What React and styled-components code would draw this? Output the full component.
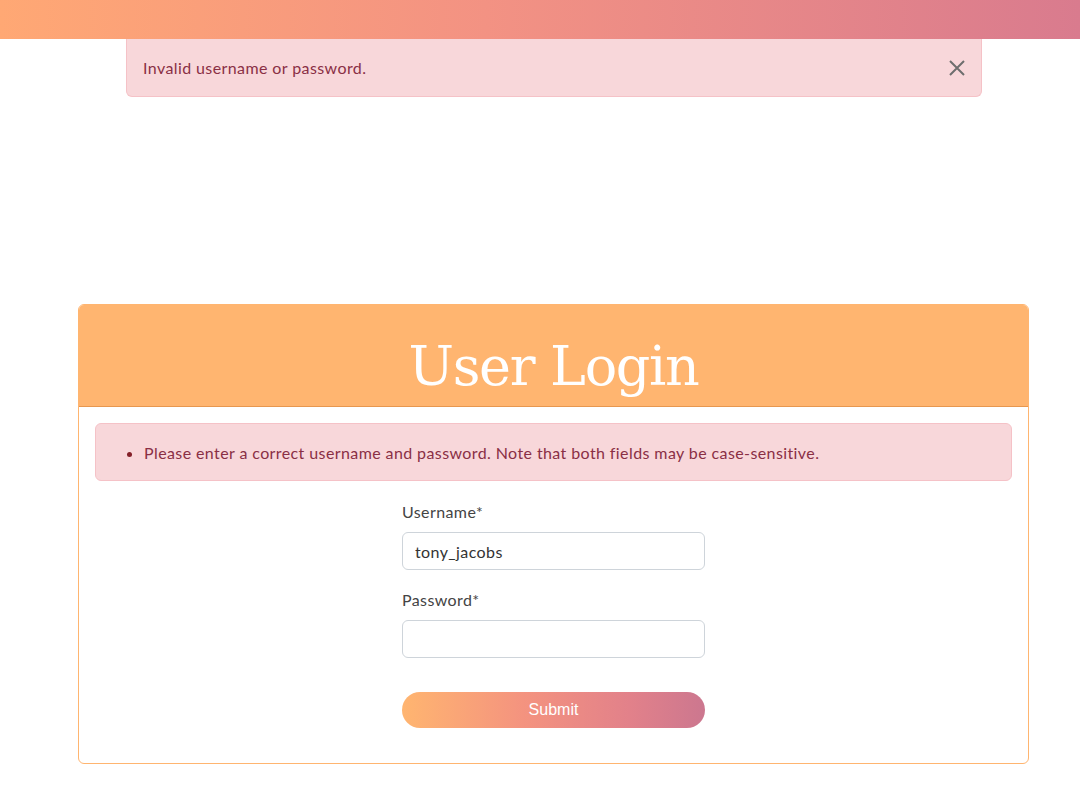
import React, { useState } from "react";
import styled, { createGlobalStyle } from "styled-components";

const GlobalStyle = createGlobalStyle`
  body {
    margin: 0;
    background: #fff;
    font-family: Lato, "Noto Sans", sans-serif;
  }
`;

const TopBar = styled.div`
  height: 39px;
  background: linear-gradient(90deg, #ffa874 0%, #f39283 45%, #d97b8e 100%);
`;

const Page = styled.div`
  padding: 0 51px 0 78px;
`;

const AlertWrap = styled.div`
  padding: 0 47px 0 48px;
`;

const Alert = styled.div`
  display: flex;
  align-items: center;
  justify-content: space-between;
  height: 58px;
  box-sizing: border-box;
  padding: 0 14px 0 16px;
  background: #f8d7da;
  border: 1px solid #f5c2c7;
  border-top: none;
  border-radius: 0 0 6px 6px;
  color: #8a2f45;
  font-size: 16px;
  letter-spacing: 0.4px;
`;

const CloseButton = styled.button`
  background: none;
  border: none;
  padding: 0;
  width: 20px;
  height: 20px;
  display: flex;
  align-items: center;
  justify-content: center;
  cursor: pointer;
`;

const Card = styled.div`
  margin-top: 207px;
  border: 1px solid #ffb570;
  border-radius: 6px;
  overflow: hidden;
`;

const CardHeader = styled.div`
  height: 102px;
  box-sizing: border-box;
  background: #ffb570;
  border-bottom: 1px solid #e7974f;
  display: flex;
  align-items: flex-end;
  justify-content: center;
`;

const Title = styled.h1`
  margin: 0 0 4px;
  color: #fff;
  font-family: "DejaVu Serif", "Liberation Serif", serif;
  font-weight: normal;
  font-size: 54px;
  line-height: 1.3;
  letter-spacing: -1.3px;
`;

const CardBody = styled.div`
  padding: 16px 16px 35px;
`;

const ErrorList = styled.ul`
  margin: 0;
  padding: 0 0 0 48px;
  height: 58px;
  box-sizing: border-box;
  display: flex;
  flex-direction: column;
  justify-content: center;
  background: #f8d7da;
  border: 1px solid #f5c2c7;
  border-radius: 6px;
  color: #8a2f45;
  font-size: 16px;
  letter-spacing: 0.4px;

  li::marker {
    color: #842029;
  }
`;

const Form = styled.form`
  width: 303px;
  margin: 20px auto 0;
  display: flex;
  flex-direction: column;
`;

const Label = styled.label`
  font-size: 16px;
  letter-spacing: 0.4px;
  color: #444;
  line-height: 22px;
  margin-bottom: 9px;
`;

const Input = styled.input`
  height: 38px;
  box-sizing: border-box;
  border: 1px solid #ced4da;
  border-radius: 6px;
  padding: 0 12px;
  font-family: Lato, "Noto Sans", sans-serif;
  font-size: 16px;
  letter-spacing: 0.4px;
  color: #333;
  margin-bottom: ${(p) => p.$gap}px;
  outline: none;
`;

const Submit = styled.button`
  height: 36px;
  border: none;
  border-radius: 18px;
  background: linear-gradient(90deg, #ffb570 0%, #f4937f 40%, #e2818a 75%, #cc778f 100%);
  color: #fff;
  font-family: Arial, "Liberation Sans", sans-serif;
  font-size: 16px;
  cursor: pointer;
`;

const App = () => {
  const [showAlert, setShowAlert] = useState(true);
  const [username, setUsername] = useState("tony_jacobs");
  const [password, setPassword] = useState("");

  return (
    <>
      <GlobalStyle />
      <TopBar />
      <Page>
        <AlertWrap>
          {showAlert ? (
            <Alert>
              <span>Invalid username or password.</span>
              <CloseButton aria-label="Close" onClick={() => setShowAlert(false)}>
                <svg width="16" height="16" viewBox="0 0 16 16">
                  <path d="M1 1L15 15M15 1L1 15" stroke="#6e6e6e" strokeWidth="2" />
                </svg>
              </CloseButton>
            </Alert>
          ) : (
            <div style={{ height: 58 }} />
          )}
        </AlertWrap>
        <Card>
          <CardHeader>
            <Title>User Login</Title>
          </CardHeader>
          <CardBody>
            <ErrorList>
              <li>
                Please enter a correct username and password. Note that both fields may be
                case-sensitive.
              </li>
            </ErrorList>
            <Form onSubmit={(e) => e.preventDefault()}>
              <Label htmlFor="username">Username*</Label>
              <Input
                id="username"
                type="text"
                value={username}
                onChange={(e) => setUsername(e.target.value)}
                $gap={19}
              />
              <Label htmlFor="password">Password*</Label>
              <Input
                id="password"
                type="password"
                value={password}
                onChange={(e) => setPassword(e.target.value)}
                $gap={34}
              />
              <Submit type="submit">Submit</Submit>
            </Form>
          </CardBody>
        </Card>
      </Page>
    </>
  );
};

export default App;
